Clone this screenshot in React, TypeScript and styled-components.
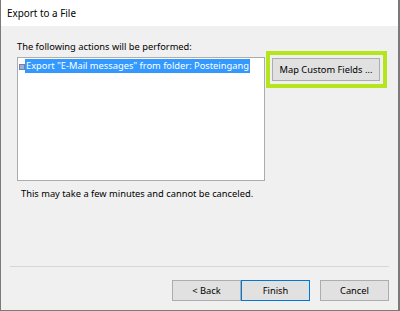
import React from "react";
import styled, { createGlobalStyle } from "styled-components";

const Global = createGlobalStyle`
  html, body { margin: 0; padding: 0; background: #ffffff; }
  body { font-family: "Noto Sans", "Segoe UI", Arial, sans-serif; font-size: 9.3px; color: #000; }
  * { box-sizing: border-box; }
`;

const Window = styled.div`
  width: 400px;
  height: 311px;
  display: flex;
  flex-direction: column;
  border-left: 1px solid #7a7a7a;
  border-right: 2px solid #7a7a7a;
  border-bottom: 1px solid #7a7a7a;
  overflow: hidden;
`;

const TitleBar = styled.div`
  height: 26px;
  flex: none;
  background: #ffffff;
  display: flex;
  align-items: center;
  padding-left: 6px;
  font-size: 9.9px;
  color: #000;
`;

const Body = styled.div`
  flex: 1;
  background: #f0f0f0;
  display: flex;
  flex-direction: column;
  padding: 13px 9px 9px 9px;
`;

const Label = styled.div`
  line-height: 16px;
  padding-left: 7px;
  color: #000;
`;

const Row = styled.div`
  display: flex;
  align-items: flex-start;
  margin-top: 2px;
  padding-left: 7px;
`;

const ListBox = styled.div`
  width: 248px;
  height: 124px;
  background: #fff;
  border: 1px solid #acacac;
  padding: 1px 0 0 1px;
`;

const Item = styled.div`
  display: flex;
  align-items: center;
  height: 14px;
`;

const ItemIcon = styled.span`
  width: 6px;
  height: 6px;
  margin-top: 2px;
  background: #9fb0d0;
  border: 1px solid #6f82aa;
`;

const ItemText = styled.span<{ $selected?: boolean }>`
  height: 14px;
  line-height: 14px;
  padding: 0 1px;
  background: ${(p) => (p.$selected ? "#3399ff" : "transparent")};
  color: ${(p) => (p.$selected ? "#fff" : "#000")};
  white-space: nowrap;
`;

const Highlight = styled.div`
  margin-left: 1px;
  margin-top: -6px;
  border: 4px solid #b5e61d;
  padding: 3px 3px 3px 2px;
`;

const Button = styled.button<{ $default?: boolean }>`
  font-family: inherit;
  font-size: 9.3px;
  color: #000;
  background: #e1e1e1;
  border: 1px solid ${(p) => (p.$default ? "#0078d7" : "#adadad")};
  padding: 0;
  height: 21px;
  width: 69px;
  display: flex;
  align-items: center;
  justify-content: center;
  white-space: nowrap;
`;

const WideButton = styled(Button)`
  width: 108px;
  height: 23px;
`;

const Note = styled.div`
  margin-top: 5px;
  padding-left: 11px;
  line-height: 16px;
`;

const Spacer = styled.div`
  flex: 1;
`;

const Separator = styled.div`
  height: 1px;
  background: #d5d5d5;
  margin: 0 0 13px 0;
`;

const Footer = styled.div`
  display: flex;
  justify-content: flex-end;
`;

const CancelGap = styled.div`
  width: 10px;
`;

export default function App() {
  return (
    <>
      <Global />
      <Window>
        <TitleBar>Export to a File</TitleBar>
        <Body>
          <Label>The following actions will be performed:</Label>
          <Row>
            <ListBox>
              <Item>
                <ItemIcon />
                <ItemText $selected>Export "E-Mail messages" from folder: Posteingang</ItemText>
              </Item>
            </ListBox>
            <Highlight>
              <WideButton>Map Custom Fields ...</WideButton>
            </Highlight>
          </Row>
          <Note>This may take a few minutes and cannot be canceled.</Note>
          <Spacer />
          <Separator />
          <Footer>
            <Button>&lt; Back</Button>
            <Button $default>Finish</Button>
            <CancelGap />
            <Button>Cancel</Button>
          </Footer>
        </Body>
      </Window>
    </>
  );
}
